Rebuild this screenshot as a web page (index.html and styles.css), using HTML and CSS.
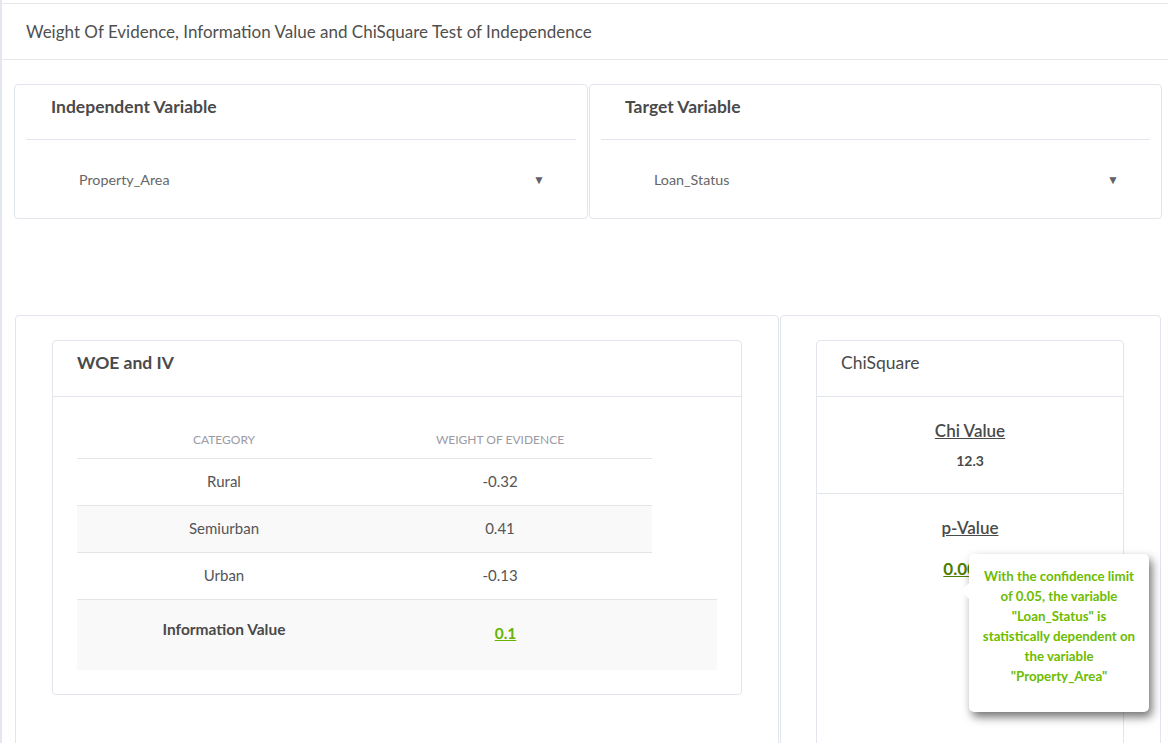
FILE: index.html
```html
<!DOCTYPE html>
<html>
<head>
<meta charset="utf-8">
<link rel="stylesheet" href="styles.css">
</head>
<body>
<div class="page">
  <div class="page-header">Weight Of Evidence, Information Value and ChiSquare Test of Independence</div>

  <div class="select-row">
    <div class="card select-card">
      <div class="card-title">Independent Variable</div>
      <div class="select-box">
        <span class="select-value">Property_Area</span>
        <span class="select-arrow">▼</span>
      </div>
    </div>
    <div class="card select-card select-card-right">
      <div class="card-title">Target Variable</div>
      <div class="select-box">
        <span class="select-value">Loan_Status</span>
        <span class="select-arrow">▼</span>
      </div>
    </div>
  </div>

  <div class="result-row">
    <div class="card outer woe-outer">
      <div class="card inner woe-card">
        <div class="inner-title bold">WOE and IV</div>
        <div class="inner-body">
          <div class="woe-table">
            <div class="trow thead">
              <div class="c1">CATEGORY</div>
              <div class="c2">WEIGHT OF EVIDENCE</div>
            </div>
            <div class="trow">
              <div class="c1">Rural</div>
              <div class="c2">-0.32</div>
            </div>
            <div class="trow striped">
              <div class="c1">Semiurban</div>
              <div class="c2">0.41</div>
            </div>
            <div class="trow">
              <div class="c1">Urban</div>
              <div class="c2">-0.13</div>
            </div>
          </div>
          <div class="iv-row">
            <div class="iv-label">Information Value</div>
            <div class="iv-value"><a class="green-link">0.1</a></div>
          </div>
        </div>
      </div>
    </div>

    <div class="card outer chi-outer">
      <div class="card inner chi-card">
        <div class="inner-title">ChiSquare</div>
        <div class="chi-section">
          <div class="chi-label">Chi Value</div>
          <div class="chi-number">12.3</div>
        </div>
        <div class="chi-section p-section">
          <div class="chi-label">p-Value</div>
          <div class="p-number"><a class="dark-green-link">0.0021</a></div>
          <div class="tooltip">With the confidence limit of 0.05, the variable "Loan_Status" is statistically dependent on the variable "Property_Area"</div>
        </div>
      </div>
    </div>
  </div>
</div>
</body>
</html>
```

FILE: styles.css
```css
* { box-sizing: border-box; }

html, body {
  margin: 0;
  padding: 0;
  background: #ffffff;
  height: 743px;
  overflow: hidden;
}

body {
  font-family: Lato, "Source Sans Pro", "Open Sans", sans-serif;
  color: #555;
}

.page {
  border-left: 2px solid #e3e6ec;
  min-height: 743px;
  padding-top: 3px;
}

.page-header {
  border-top: 1px solid #e6e8ec;
  border-bottom: 1px solid #e6e8ec;
  height: 57px;
  padding-left: 24px;
  display: flex;
  align-items: center;
  font-size: 17px;
  color: #4f4f4f;
}

.card {
  border: 1px solid #e2e6ec;
  border-radius: 4px;
  background: #fff;
}

.select-row {
  display: flex;
  gap: 1px;
  padding: 24px 6px 0 12px;
}

.select-card {
  width: 574px;
  height: 135px;
  padding: 0 11px;
}

.select-card-right {
  width: 573px;
}

.card-title {
  height: 55px;
  border-bottom: 1px solid #e2e6ec;
  padding: 11px 0 0 25px;
  font-size: 17.5px;
  line-height: 22px;
  font-weight: 700;
  color: #4a4a4a;
}

.select-card-right .card-title {
  padding-left: 24px;
}

.select-box {
  height: 77px;
  display: flex;
  align-items: center;
  justify-content: space-between;
  padding: 2px 31px 0 53px;
  font-size: 14.3px;
  color: #666;
}

.select-arrow {
  font-size: 12px;
  color: #5f6068;
}

.result-row {
  display: flex;
  gap: 1px;
  padding: 96px 7px 0 13px;
}

.outer {
  height: 460px;
  padding: 24px 36px 0 36px;
}

.woe-outer { width: 764px; }
.chi-outer { width: 381px; padding-left: 35px; padding-right: 36px; }

.inner {
  border-radius: 4px;
}

.woe-card {
  width: 690px;
  height: 355px;
}

.chi-card {
  width: 308px;
  height: 420px;
}

.inner-title {
  height: 56px;
  border-bottom: 1px solid #e2e6ec;
  padding: 11px 0 0 24px;
  font-size: 17.5px;
  line-height: 22px;
  color: #4a4a4a;
}

.inner-title.bold { font-weight: 700; }

.inner-body {
  padding: 21px 24px 24px 24px;
}

.woe-table {
  width: 575px;
}

.trow {
  display: flex;
  height: 47px;
  align-items: center;
  border-top: 1px solid #e2e4e8;
  font-size: 15px;
  color: #555;
  padding-bottom: 3px;
}

.trow.thead {
  border-top: none;
  height: 40px;
  align-items: flex-start;
  padding-top: 14px;
  padding-bottom: 0;
  font-size: 12px;
  color: #9a9ba5;
}

.trow.striped { background: #f9f9f9; }

.c1 { width: 294px; text-align: center; }
.c2 { width: 258px; text-align: center; }

.iv-row {
  display: flex;
  width: 640px;
  height: 71px;
  background: #f9f9f9;
  border-top: 1px solid #e2e4e8;
  font-size: 15.5px;
}

.iv-label {
  width: 294px;
  text-align: center;
  font-weight: 700;
  color: #4a4a4a;
  padding-top: 20px;
}

.iv-value {
  width: 269px;
  text-align: center;
  padding-top: 24px;
}

.green-link {
  color: #66b400;
  font-weight: 700;
  text-decoration: underline;
}

.dark-green-link {
  color: #4f7d00;
  font-weight: 700;
  text-decoration: underline;
}

.chi-section {
  height: 97px;
  border-bottom: 1px solid #e2e6ec;
  text-align: center;
  padding-top: 23px;
}

.chi-label {
  font-size: 17px;
  font-weight: 600;
  color: #4a4a4a;
  text-decoration: underline;
}

.chi-number {
  margin-top: 11px;
  font-size: 14px;
  font-weight: 700;
  color: #4a4a4a;
}

.p-section {
  position: relative;
  border-bottom: none;
  height: auto;
  padding-top: 23px;
}

.p-number {
  margin-top: 21px;
  font-size: 17px;
  line-height: 20px;
}

.tooltip {
  position: absolute;
  left: 152px;
  top: 60px;
  width: 180px;
  height: 158px;
  background: #fff;
  border-radius: 5px;
  box-shadow: 3px 5px 10px rgba(0, 0, 0, 0.55);
  padding: 12px 8px 0 8px;
  font-size: 13.3px;
  line-height: 20px;
  font-weight: 700;
  color: #6cbc00;
  text-align: center;
}

.tooltip::before {
  content: "";
  position: absolute;
  left: -8px;
  top: 29px;
  border-top: 8px solid transparent;
  border-bottom: 8px solid transparent;
  border-right: 8px solid #fff;
}
```
